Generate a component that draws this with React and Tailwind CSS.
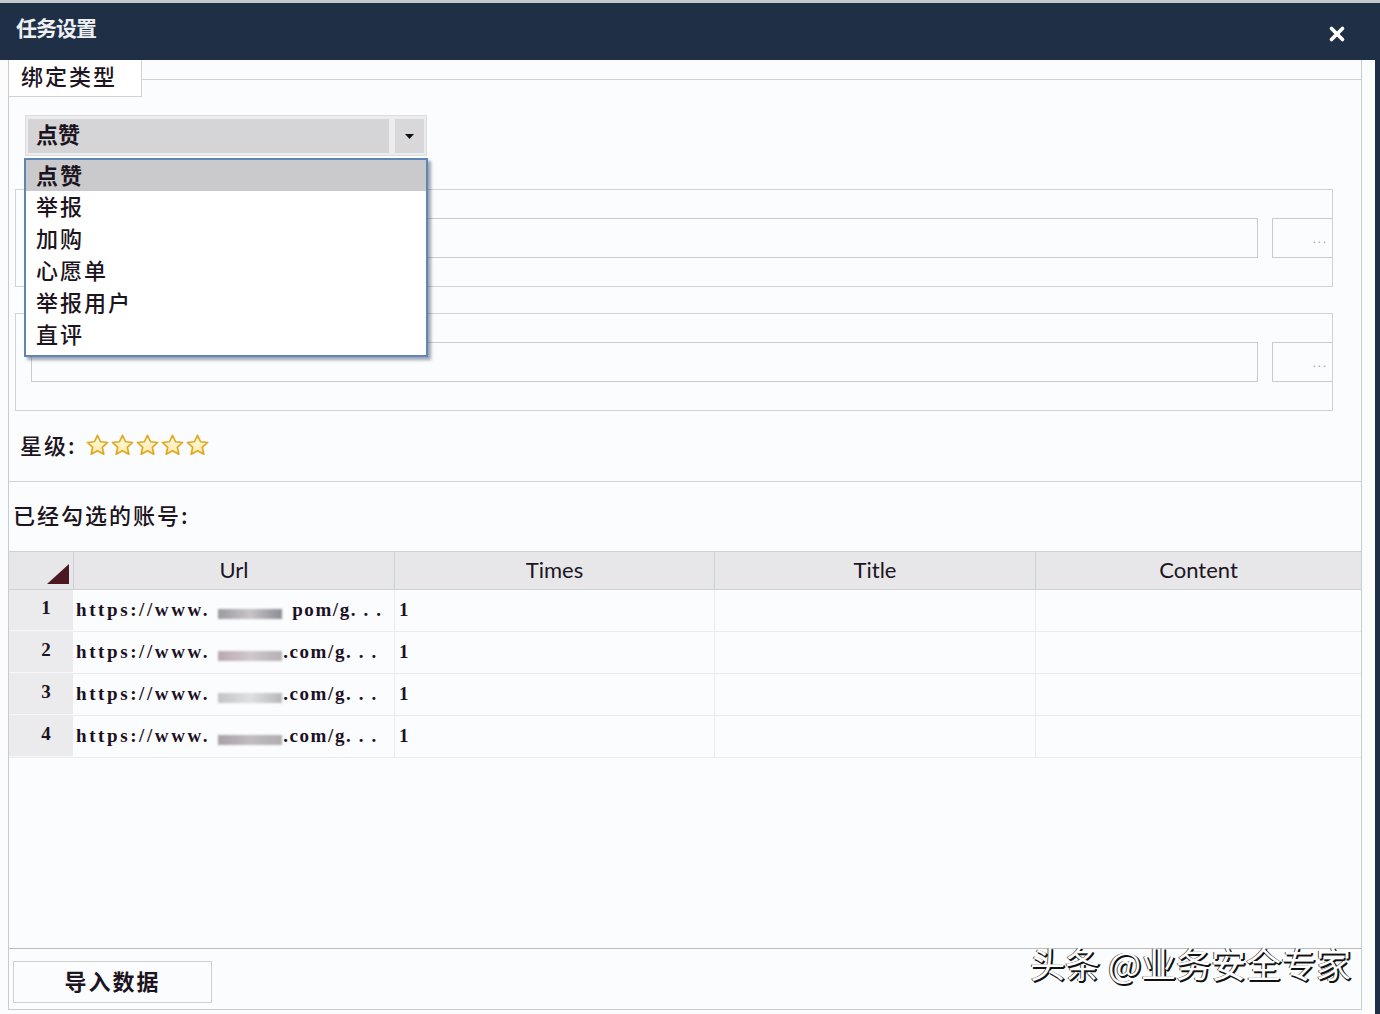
import React from 'react';
import { X } from 'lucide-react';

const cjk = { fontFamily: '"Noto Sans CJK SC", "Noto Sans", sans-serif' };
const serif = { fontFamily: '"Liberation Serif", "DejaVu Serif", serif' };
const latin = { fontFamily: 'Lato, "Open Sans", sans-serif' };

const options = ['点赞', '举报', '加购', '心愿单', '举报用户', '直评'];

const rows = [
  { id: 1, tail: 'pom/g. . .', gap: 'ml-[10px]', blur: 'from-[#9a9aa0] via-[#c8c4c8] to-[#8c8c94]' },
  { id: 2, tail: '.com/g. . .', gap: 'ml-[1px]', blur: 'from-[#b8a8b0] via-[#d0c8cc] to-[#b4b0b4]' },
  { id: 3, tail: '.com/g. . .', gap: 'ml-[1px]', blur: 'from-[#c4c4c8] via-[#e0e0e0] to-[#b8b8bc]' },
  { id: 4, tail: '.com/g. . .', gap: 'ml-[1px]', blur: 'from-[#a8a0a8] via-[#c0bcc0] to-[#b0acb0]' },
];

const Star = () => (
  <svg width="25" height="25" viewBox="0 0 24 24">
    <defs>
      <linearGradient id="starFill" x1="0" y1="0" x2="0" y2="1">
        <stop offset="0%" stopColor="#fffbe6" />
        <stop offset="100%" stopColor="#ffe9a8" />
      </linearGradient>
    </defs>
    <path
      d="M12 2.2l2.9 6.2 6.8.7-5.1 4.6 1.5 6.7L12 17l-6.1 3.4 1.5-6.7-5.1-4.6 6.8-.7z"
      fill="url(#starFill)"
      stroke="#e0a820"
      strokeWidth="1.6"
      strokeLinejoin="round"
    />
  </svg>
);

const PathBox = () => (
  <div className="ml-[6px] w-[1318px] h-[98px] border border-[#cfd3d8] flex items-center pl-[15px] overflow-hidden">
    <div className="w-[1229px] h-[40px] border border-[#c8ccd0] bg-[#fbfcfd]" />
    <div className="ml-[14px] w-[60px] h-[40px] border border-[#c8ccd0] border-r-0 bg-[#fbfcfd] flex items-center justify-end pr-[4px] text-[11px] text-[#9aa0a8] tracking-[2px]">
      ...
    </div>
  </div>
);

export default function App() {
  return (
    <div className="w-[1380px] h-[1014px] bg-[#fbfcfd] flex flex-col overflow-hidden text-[#1c1420]" style={cjk}>
      {/* Title bar */}
      <div className="h-[60px] shrink-0 bg-[#1f3046] border-t-[3px] border-[#c4c8cc] flex items-center justify-between pl-[16px] pr-[32px] pb-[8px]">
        <span className="text-[21px] font-bold text-[#eef0f4] tracking-[-1px]">任务设置</span>
        <X size={22} strokeWidth={4} className="text-white mt-[12px]" />
      </div>

      <div className="flex h-[954px]">
        <div className="w-[8px]" />
        <div className="relative w-[1354px] h-[950px] border-l border-r border-b border-[#c8ccd0] flex flex-col">
          {/* Tab row */}
          <div className="flex h-[37px] shrink-0">
            <div className="w-[133px] border-r border-b border-[#cfd3d8] bg-white pl-[12px] pb-[6px] flex items-center text-[22px] font-medium tracking-[2px]">
              绑定类型
            </div>
            <div className="flex-1 h-[20px] border-b border-[#cfd3d8]" />
          </div>

          {/* Combobox */}
          <div className="relative ml-[16px] mt-[18px] w-[402px] h-[41px] border border-[#dcdcde] bg-[#ececee] flex items-center px-[2px] gap-[6px]">
            <div className="flex-1 h-[34px] bg-[#d5d5d8] flex items-center pl-[8px] pb-[5px] text-[22px] font-bold">点赞</div>
            <div className="w-[29px] h-[34px] bg-[#d8d8db] flex items-center justify-center pt-[2px]">
              <svg width="9" height="5" viewBox="0 0 9 5">
                <path d="M0 0h9L4.5 5z" fill="#111" />
              </svg>
            </div>

            {/* Dropdown list */}
            <div className="absolute left-[-2px] top-[42px] z-10 w-[404px] h-[199px] bg-white border-2 border-[#5f86b2] shadow-[3px_3px_3px_rgba(40,60,90,0.45)] flex flex-col">
              {options.map((o, i) => (
                <div
                  key={o}
                  className={
                    i === 0
                      ? 'h-[31px] bg-[#cacacd] flex items-center pl-[10px] pb-[3px] text-[22px] font-bold tracking-[2px]'
                      : 'h-[32px] flex items-center pl-[10px] pb-[3px] text-[22px] font-medium tracking-[2px]'
                  }
                >
                  {o}
                </div>
              ))}
            </div>
          </div>

          <div className="mt-[33px]">
            <PathBox />
          </div>
          <div className="mt-[26px]">
            <PathBox />
          </div>

          {/* Star level */}
          <div className="h-[71px] shrink-0 border-b border-[#cfd3d8] flex items-center pl-[11px] pb-[4px]">
            <span className="text-[22px] font-medium tracking-[2px]">星级:</span>
            <div className="flex ml-[8px] mt-[3px]">
              <Star />
              <Star />
              <Star />
              <Star />
              <Star />
            </div>
          </div>

          {/* Selected accounts */}
          <div className="h-[69px] shrink-0 flex items-center pl-[4px] pb-[4px] text-[22px] font-medium tracking-[2px]">
            已经勾选的账号:
          </div>

          {/* Table */}
          <div className="grid grid-cols-[64px_321px_320px_321px_1fr] h-[39px] bg-[#e7e7e9] border-t border-b border-[#cdd0d4] text-[22px] text-[#201424]" style={latin}>
            <div className="flex items-end justify-end pr-[4px] pb-[5px]">
              <svg width="22" height="20" viewBox="0 0 22 20">
                <path d="M22 0V20H0z" fill="#4a1820" />
              </svg>
            </div>
            <div className="border-l border-[#cdd0d4] flex items-center justify-center pb-[3px]">Url</div>
            <div className="border-l border-[#cdd0d4] flex items-center justify-center pb-[3px]">Times</div>
            <div className="border-l border-[#cdd0d4] flex items-center justify-center pb-[3px]">Title</div>
            <div className="border-l border-[#cdd0d4] flex items-center justify-center pb-[3px]">Content</div>
          </div>
          {rows.map((r) => (
            <div key={r.id} className="grid grid-cols-[64px_321px_320px_321px_1fr] h-[42px] border-b border-[#ebecee]">
              <div className="bg-[#ebebed] border-b border-[#f6f6f8] flex items-center justify-center pl-[10px] pb-[4px] text-[19px] font-bold" style={serif}>
                {r.id}
              </div>
              <div className="flex items-center pl-[3px] text-[19px] font-bold text-[#1c1024] whitespace-nowrap" style={serif}>
                <span className="tracking-[2.6px]">https://www.</span>
                <span className={`inline-block w-[64px] h-[10px] mt-[6px] ml-[8px] bg-gradient-to-r ${r.blur} blur-[1px]`} />
                <span className={`tracking-[1.6px] ${r.gap}`}>{r.tail}</span>
              </div>
              <div className="border-l border-[#eaebed] flex items-center pl-[4px] text-[19px] font-bold" style={serif}>
                1
              </div>
              <div className="border-l border-[#eaebed]" />
              <div className="border-l border-[#eaebed]" />
            </div>
          ))}

          <div className="flex-1 border-b border-[#b8bcc0]" />

          {/* Footer */}
          <div className="h-[60px] shrink-0 pt-[12px] pl-[4px]">
            <button className="w-[199px] h-[42px] border border-[#cdd0d4] bg-[#fbfcfd] pb-[3px] text-[22px] font-bold tracking-[2px] flex items-center justify-center">
              导入数据
            </button>
          </div>

          {/* Watermark */}
          <div className="absolute right-[10px] bottom-[20px] text-[35px] text-white whitespace-nowrap [text-shadow:2px_1px_0_#111,1px_2px_0_#111,-1px_0_0_#555]">
            头条 @业务安全专家
          </div>
        </div>
        <div className="w-[13px]" />
        <div className="w-[5px] bg-[#1f3046]" />
      </div>
    </div>
  );
}
